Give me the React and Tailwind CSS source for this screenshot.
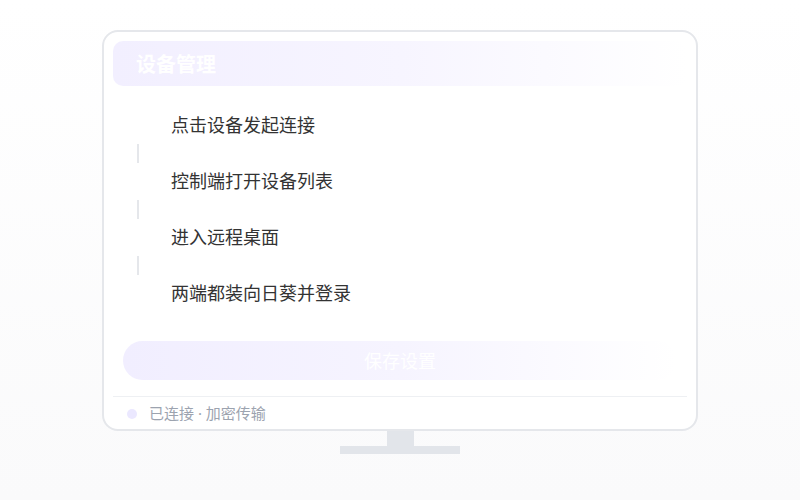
import React from "react";

const steps = ["点击设备发起连接", "控制端打开设备列表", "进入远程桌面", "两端都装向日葵并登录"];

export default function App() {
  return (
    <div
      className="w-[800px] h-[500px] bg-gradient-to-b from-white to-[#fafafb] flex flex-col items-center pt-[30px]"
      style={{ fontFamily: '"Noto Sans", "Noto Sans CJK SC", sans-serif' }}
    >
      {/* Monitor */}
      <div className="w-[596px] h-[401px] bg-white border-2 border-[#e5e7eb] rounded-[16px] px-[9px] pt-[9px] flex flex-col">
        {/* Header */}
        <div className="h-[45px] rounded-[10px] bg-gradient-to-r from-[#f2efff] via-[#f7f5ff] to-white flex items-center pl-[23px] pt-[3px]">
          <span className="text-white text-[20px] font-bold leading-none">设备管理</span>
        </div>

        {/* Steps */}
        <div className="flex flex-col pt-[27px]">
          {steps.map((s, i) => (
            <div key={s} className="flex flex-col">
              <div className="h-[24px] flex items-center pl-[58px] text-[18px] text-[#333] leading-none">{s}</div>
              {i < steps.length - 1 && (
                <div className="h-[32px] flex items-center pl-[24px]">
                  <div className="w-[2px] h-[19px] bg-[#e5e7eb]" />
                </div>
              )}
            </div>
          ))}
        </div>

        {/* Save button */}
        <div className="mt-[36px] mx-[10px] h-[39px] rounded-full bg-gradient-to-r from-[#f1eeff] via-[#f6f4ff] to-white flex items-center justify-center">
          <span className="text-white text-[18px] leading-none">保存设置</span>
        </div>

        {/* Footer */}
        <div className="mt-[16px] border-t border-[#eef0f3] flex-1 flex items-center pl-[14px] gap-[12px] pt-[1px]">
          <div className="w-[10px] h-[10px] rounded-full bg-[#ebe8ff]" />
          <span className="text-[15px] text-[#9ca3af] leading-none">已连接 · 加密传输</span>
        </div>
      </div>

      {/* Stand */}
      <div className="w-[27px] h-[15px] bg-[#e2e5ea]" />
      <div className="w-[120px] h-[8px] bg-[#e2e5ea]" />
    </div>
  );
}
